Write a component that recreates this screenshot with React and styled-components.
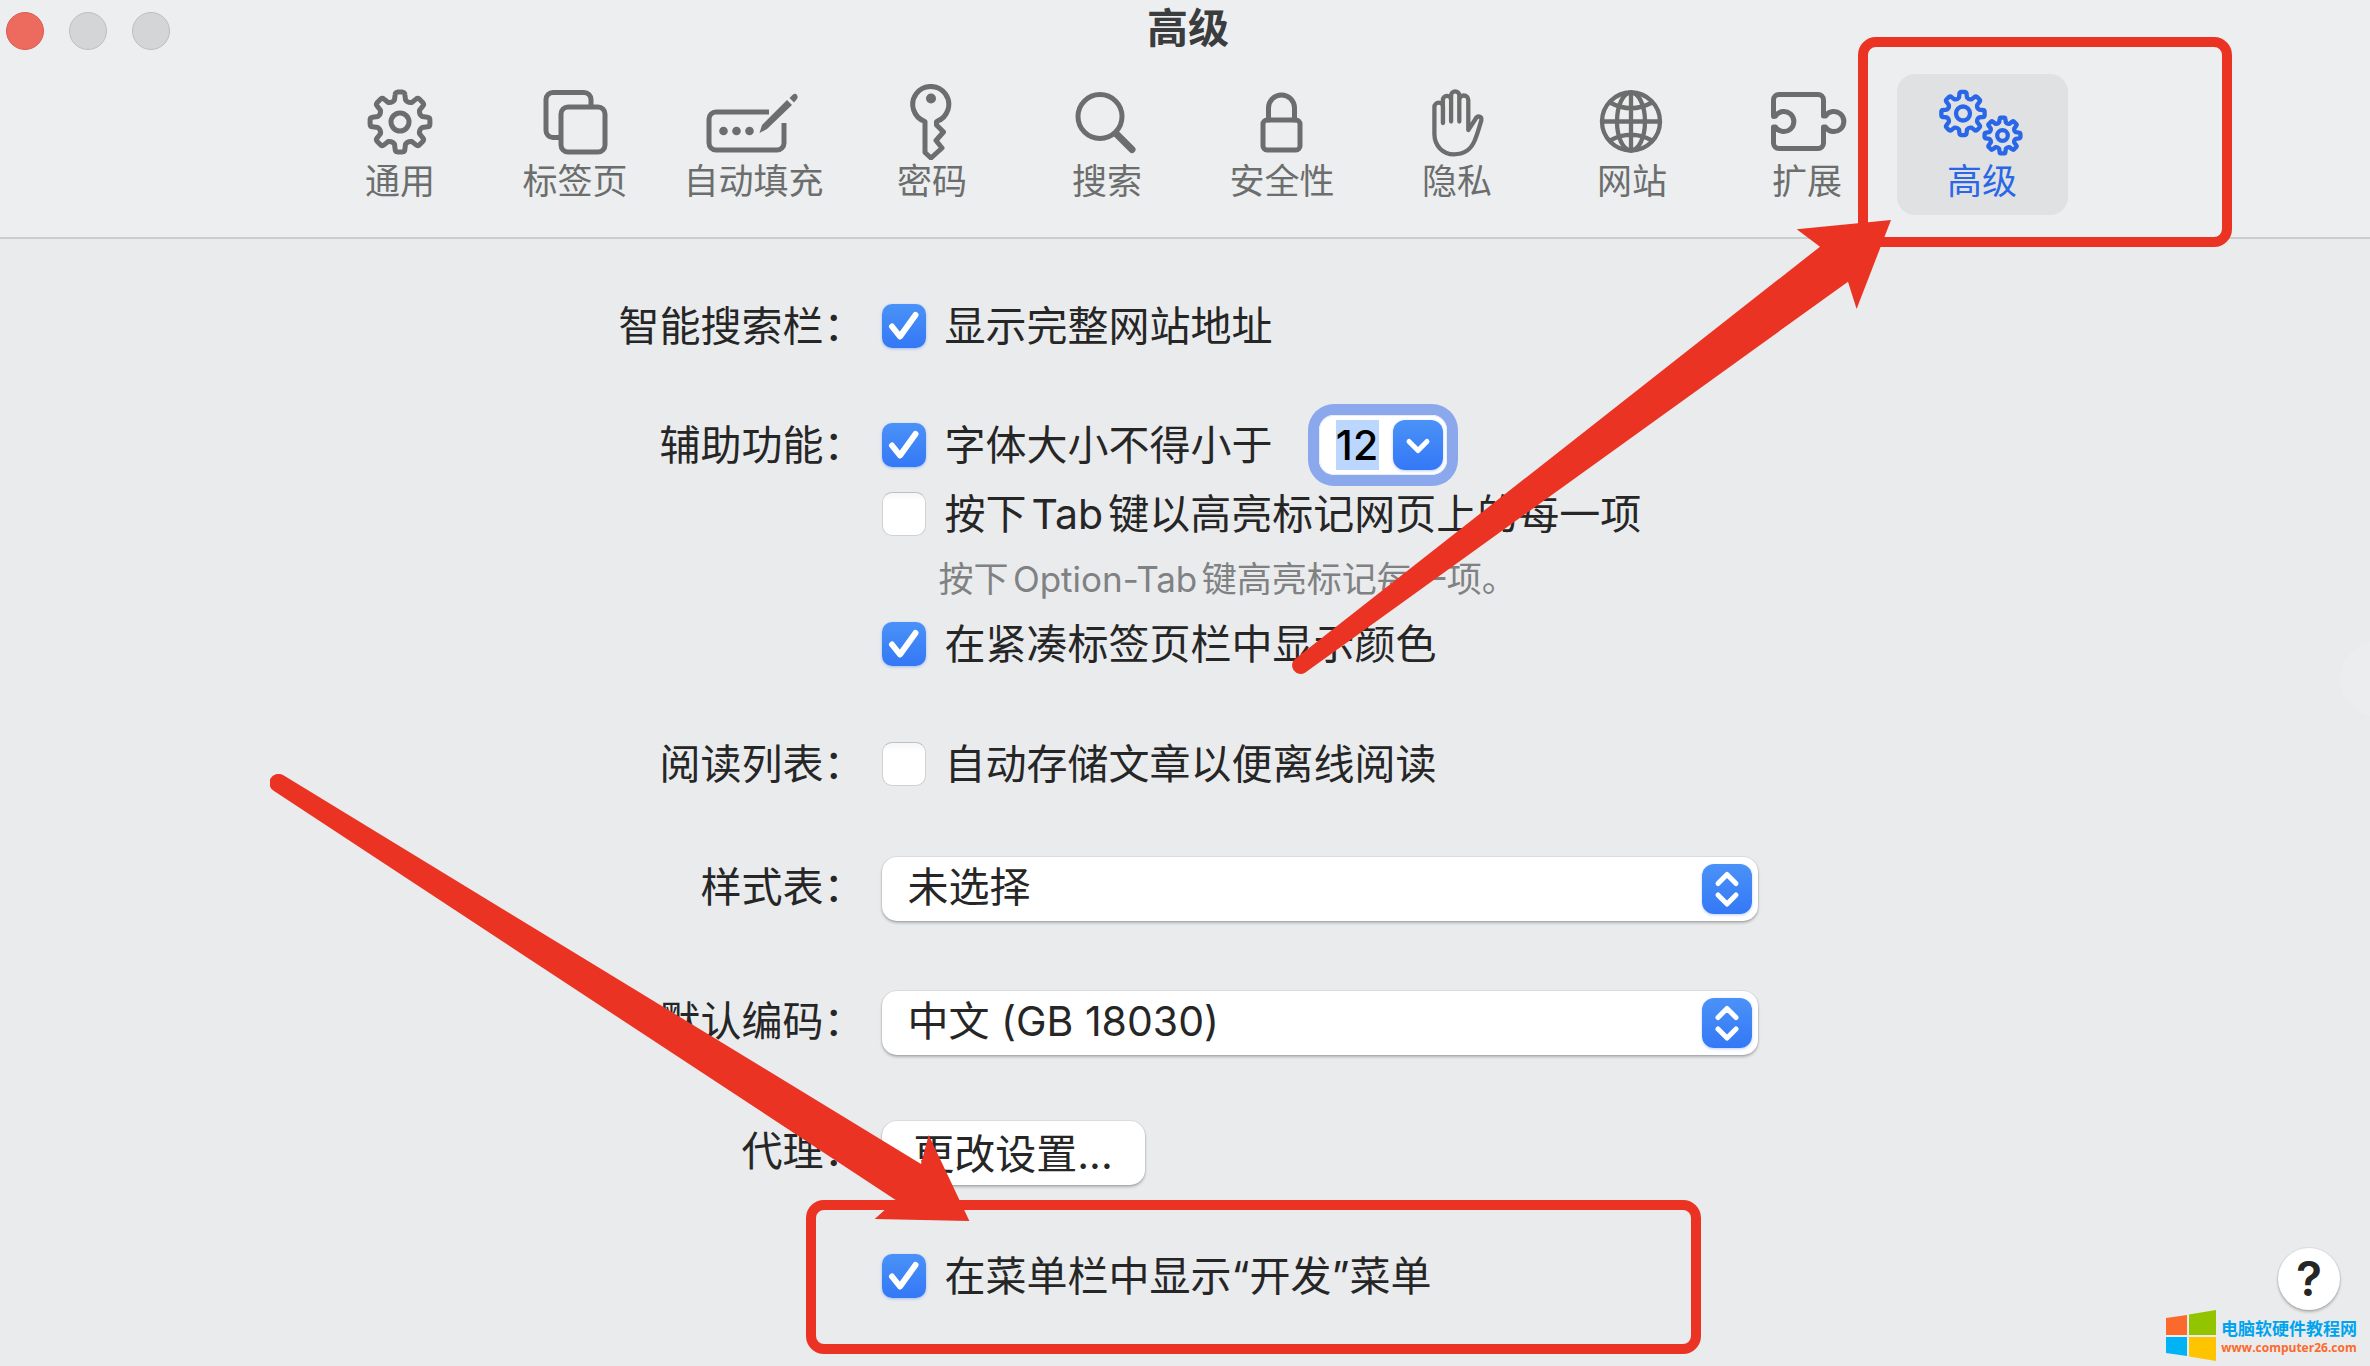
import React, { useState } from "react";
import styled, { createGlobalStyle } from "styled-components";

const GlobalStyle = createGlobalStyle`
    * {
        box-sizing: border-box;
    }
    body {
        margin: 0;
        background-color: #eaebed;
        font-family: Inter, "Noto Sans CJK SC", sans-serif;
        color: #262626;
    }
    button, input, select {
        font-family: inherit;
        color: inherit;
    }
`;

const Window = styled.div`
    position: relative;
    min-height: 100vh;
    overflow: hidden;
`;

const Header = styled.header`
    background-color: #edeef0;
    border-bottom: 2px solid #cbcdcf;
    padding-bottom: 22px;
`;

const TitleBar = styled.div`
    display: grid;
    grid-template-columns: 1fr auto 1fr;
    align-items: center;
    height: 62px;
    padding-left: 6px;
`;

const Lights = styled.div`
    display: flex;
    gap: 25px;
`;

const Light = styled.button`
    width: 38px;
    height: 38px;
    padding: 0;
    border-radius: 50%;
    border: 1px solid ${({$close}) => ($close ? "#dc5a4e" : "#bcbebf")};
    background-color: ${({$close}) => ($close ? "#ed6a5e" : "#d4d5d7")};
`;

const Title = styled.h1`
    align-self: start;
    margin: 0;
    font-size: 41px;
    line-height: 57px;
    font-weight: 700;
    color: #3b3c3d;
`;

const Toolbar = styled.nav`
    display: flex;
    justify-content: center;
    gap: 4px;
    margin-top: 12px;
    padding-left: 12px;
`;

const TabSlot = styled.div`
    position: relative;
`;

const Tab = styled.button`
    display: flex;
    flex-direction: column;
    align-items: center;
    min-width: 171px;
    padding: 10px 19px 12px 19px;
    border: 0;
    border-radius: 18px;
    background-color: ${({$active}) => ($active ? "#e0e1e3" : "transparent")};
    color: ${({$active}) => ($active ? "#2966e8" : "#6c6e6e")};
`;

const TabLabel = styled.span`
    font-size: 35px;
    line-height: 43px;
    white-space: nowrap;
`;

const TabIcon = styled.svg`
    display: block;
    width: 100px;
    height: 76px;
    fill: none;
    stroke: currentColor;
    stroke-width: 5;
    stroke-linecap: round;
    stroke-linejoin: round;
`;

const Form = styled.form`
    display: flex;
    flex-direction: column;
    align-items: center;
    padding: 62px 0 60px 6px;
`;

const FormRow = styled.div`
    display: grid;
    grid-template-columns: 246px minmax(0, 876px);
    column-gap: 17px;
    width: 100%;
    max-width: 1139px;
    margin-bottom: ${({$space}) => $space || 0}px;
`;

const RowLabel = styled.div`
    text-align: right;
    white-space: nowrap;
    font-size: 41px;
    line-height: ${({$height}) => $height || 50}px;
`;

const Field = styled.div`
    position: relative;
    display: flex;
    flex-direction: column;
    gap: 14px;
`;

const CheckRow = styled.div`
    display: flex;
    align-items: center;
    height: ${({$tall}) => ($tall ? 60 : 50)}px;
`;

const CheckLabel = styled.label`
    display: flex;
    align-items: center;
    gap: 19px;
    font-size: 41px;
    line-height: 50px;
    white-space: nowrap;
    text-autospace: normal;
`;

const CheckBox = styled.span`
    position: relative;
    width: 44px;
    height: 44px;
`;

const CheckInput = styled.input`
    appearance: none;
    display: block;
    width: 44px;
    height: 44px;
    margin: 0;
    border: 1px solid #d0d1d2;
    border-top-color: #bfc0c1;
    border-radius: 10px;
    background: linear-gradient(#f6f6f6, #fff 20%);
    &:checked {
        border: 0;
        background: linear-gradient(#4a92f8, #3478f6);
        box-shadow: 0 1px 3px rgba(52, 120, 246, 0.4);
    }
`;

const CheckMark = styled.svg`
    position: absolute;
    inset: 0;
    fill: none;
    stroke: white;
    stroke-width: 6;
    stroke-linecap: round;
    stroke-linejoin: round;
    pointer-events: none;
`;

const Hint = styled.p`
    margin: 0 0 0 57px;
    font-size: 35px;
    line-height: 52px;
    color: #808182;
    white-space: nowrap;
    text-autospace: normal;
`;

const SizeBox = styled.div`
    display: flex;
    align-items: center;
    height: 60px;
    margin-left: 46px;
    padding: 0 4px 0 17px;
    gap: 14px;
    border-radius: 15px;
    background-color: white;
    box-shadow: inset 0 0 0 1px #e8edfb, 0 0 0 11px #8ba8ec;
`;

const SizeInput = styled.input`
    width: 43px;
    height: 50px;
    padding: 0;
    border: 0;
    outline: 0;
    text-align: center;
    font-size: 41px;
    font-weight: 500;
    color: black;
    background-color: #bbd7fd;
`;

const BlueBadge = styled.span`
    display: flex;
    align-items: center;
    justify-content: center;
    width: 50px;
    height: 50px;
    border-radius: 12px;
    background: linear-gradient(#4a92f8, #3478f6);
    box-shadow: 0 1px 3px rgba(52, 120, 246, 0.35);
    svg {
        fill: none;
        stroke: white;
        stroke-width: 5;
        stroke-linecap: round;
        stroke-linejoin: round;
    }
`;

const BadgeButton = styled(BlueBadge).attrs({ as: "button", type: "button" })`
    padding: 0;
    border: 0;
`;

const SelectBadge = styled(BlueBadge)`
    position: absolute;
    top: 7px;
    right: 6px;
    pointer-events: none;
`;

const SelectWrap = styled.div`
    position: relative;
`;

const Select = styled.select`
    appearance: none;
    display: block;
    width: 100%;
    height: 64px;
    padding: 0 70px 4px 26px;
    border: 0;
    border-radius: 15px;
    background-color: white;
    box-shadow: 0 0 0 1px rgba(0, 0, 0, 0.06), 0 2px 3px rgba(0, 0, 0, 0.25);
    font-size: 41px;
`;

const PushButton = styled.button`
    align-self: flex-start;
    width: 263px;
    height: 64px;
    padding: 0 0 6px 0;
    border: 0;
    border-radius: 15px;
    background-color: white;
    box-shadow: 0 0 0 1px rgba(0, 0, 0, 0.06), 0 2px 3px rgba(0, 0, 0, 0.25);
    font-size: 41px;
`;

const Marker = styled.div`
    position: absolute;
    z-index: 2;
    border: 10px solid #eb3323;
    border-radius: 18px;
    pointer-events: none;
`;

const TabMarker = styled(Marker)`
    top: -37px;
    right: -164px;
    bottom: -32px;
    left: -39px;
`;

const MenuMarker = styled(Marker)`
    top: -51px;
    bottom: -53px;
    left: -76px;
    right: 57px;
`;

const Arrow = styled.svg`
    position: absolute;
    z-index: 2;
    fill: #eb3323;
    pointer-events: none;
`;

const TabArrow = styled(Arrow)`
    top: 145px;
    left: -606px;
`;

const MenuArrow = styled(Arrow)`
    top: -477px;
    left: -612px;
`;

const Halo = styled.div`
    position: absolute;
    top: 641px;
    right: -48px;
    width: 78px;
    height: 76px;
    border-radius: 50%;
    background-color: #ecedef;
`;

const Corner = styled.div`
    position: absolute;
    right: 13px;
    bottom: 5px;
    display: flex;
    flex-direction: column;
    align-items: flex-end;
`;

const HelpButton = styled.button`
    width: 62px;
    height: 62px;
    margin-right: 17px;
    padding: 0;
    border: 0;
    border-radius: 50%;
    background-color: white;
    box-shadow: 0 0 0 1px rgba(0, 0, 0, 0.06), 0 2px 3px rgba(0, 0, 0, 0.25);
    font-size: 48px;
    font-weight: 600;
    line-height: 62px;
`;

const SiteLink = styled.a`
    display: flex;
    align-items: center;
    gap: 5px;
    text-decoration: none;
`;

const SiteText = styled.span`
    display: flex;
    flex-direction: column;
    align-items: center;
    white-space: nowrap;
`;

const SiteName = styled.span`
    font: 700 17px/24px "Noto Sans CJK SC", sans-serif;
    color: #00a4ee;
`;

const SiteAddress = styled.span`
    font: 700 12px/16px "Open Sans", sans-serif;
    color: #fb6a2c;
`;

// eight-toothed cog, outer is the radius of the tooth tops
const gearPath = (cx, cy, outer) => {
    const at = (radius, degrees) => {
        const angle = (degrees * Math.PI) / 180;
        return `${(cx + radius * Math.sin(angle)).toFixed(2)} ${(cy - radius * Math.cos(angle)).toFixed(2)}`;
    };
    let path = "";
    for (let i = 0; i < 8; i++) {
        const a = i * 45;
        path += `${i === 0 ? "M" : "L"}${at(outer * 0.76, a - 14)}`;
        path += `L${at(outer * 0.93, a - 10)}Q${at(outer, a - 9)} ${at(outer, a - 5)}`;
        path += `L${at(outer, a + 5)}Q${at(outer, a + 9)} ${at(outer * 0.93, a + 10)}`;
        path += `L${at(outer * 0.76, a + 14)}Q${at(outer * 0.68, a + 22.5)} ${at(outer * 0.76, a + 31)}`;
    }
    return path + "Z";
};

const icons = {
    general: (
        <>
            <path d={gearPath(50, 38, 30)} />
            <circle cx="50" cy="38" r="9" />
        </>
    ),
    tabs: (
        <>
            <path d="M34 53.5H28a7 7 0 0 1-7-7v-31a7 7 0 0 1 7-7h31a7 7 0 0 1 7 7v6" />
            <rect x="36" y="23" width="44" height="45" rx="7" />
        </>
    ),
    autofill: (
        <>
            <path d="M66 28H13a7 7 0 0 0-7 7v24a7 7 0 0 0 7 7h61a7 7 0 0 0 7-7V39" strokeLinecap="butt" />
            <g fill="currentColor" stroke="none">
                <circle cx="20.500" cy="47" r="4.300" />
                <circle cx="33.500" cy="47" r="4.300" />
                <circle cx="46.500" cy="47" r="4.300" />
                <path d="M56.500 49L59 41 84 16 89 21 64 45Z" />
                <path d="M86.500 14L90 10.500Q92.500 9 94 11T94 15L91 18.500Z" />
            </g>
        </>
    ),
    password: (
        <>
            <path d="M43 37.500A18 18 0 1 1 54.500 37.500V41L61.500 48 54 56.500 60 64 49 74 43 68.500Z" />
            <circle cx="49" cy="14.500" r="5" fill="currentColor" stroke="none" />
        </>
    ),
    search: (
        <>
            <circle cx="43" cy="32.500" r="22" />
            <path d="M59.500 50L75 65.500" strokeWidth="7" />
        </>
    ),
    security: (
        <>
            <rect x="31" y="36" width="37" height="30" rx="4" />
            <path d="M36.500 36V24a13 13 0 0 1 26 0V36" />
        </>
    ),
    privacy: (
        <path
            strokeWidth="4.300"
            d="M36 39V23a4.300 4.300 0 0 0-8.600 0V50C27.500 62 36 70.300 47 70.300C58 70.300 64 65 67.500 57
               C70.500 50 72 44 74.300 36.500C75 32 70.500 31 68.500 35L61.300 46V16a4.500 4.500 0 0 0-9 0V37.500V11.500a4.100 4.100 0 0 0-8.200 0V37.500V16a4.100 4.100 0 0 0-8.200 0V39"
        />
    ),
    websites: (
        <g strokeWidth="4.300">
            <circle cx="49" cy="37.500" r="29" />
            <ellipse cx="49" cy="37.500" rx="14" ry="29" />
            <path d="M49 8.500V66.500M20 37.500H78M28 18.500Q49 30 70 18.500M28 56.500Q49 45 70 56.500" />
        </g>
    ),
    extensions: (
        <path
            d="M16.500 32.500V16a5.500 5.500 0 0 1 5.500-5.500H61a5.500 5.500 0 0 1 5.500 5.500V32H68.500
               A10 10 0 1 1 68.500 43H66.500V59a5.500 5.500 0 0 1-5.500 5.500H22a5.500 5.500 0 0 1-5.500-5.500V43H18.500A10 10 0 1 0 18.500 32Z"
        />
    ),
    advanced: (
        <g strokeWidth="4.300">
            <path d={gearPath(31, 29.5, 21.700)} />
            <circle cx="31" cy="29.500" r="7" />
            <path d={gearPath(70.500, 51.500, 18)} />
            <circle cx="70.500" cy="51.500" r="5.300" />
        </g>
    ),
};

const tabs = [
    { id: "general", label: "通用" },
    { id: "tabs", label: "标签页" },
    { id: "autofill", label: "自动填充" },
    { id: "password", label: "密码" },
    { id: "search", label: "搜索" },
    { id: "security", label: "安全性" },
    { id: "privacy", label: "隐私" },
    { id: "websites", label: "网站" },
    { id: "extensions", label: "扩展" },
    { id: "advanced", label: "高级" },
];

const Check = ({ id, label, initial = false }) => {
    const [checked, setChecked] = useState(initial);
    return (
        <CheckLabel htmlFor={id}>
            <CheckBox>
                <CheckInput id={id} type="checkbox" checked={checked} onChange={() => setChecked(!checked)} />
                {checked && (
                    <CheckMark viewBox="0 0 44 44" aria-hidden="true">
                        <path d="M10 22.500L18 32.500 33.500 11" />
                    </CheckMark>
                )}
            </CheckBox>
            {label}
        </CheckLabel>
    );
};

const PopUp = ({ id, options }) => (
    <SelectWrap>
        <Select id={id}>
            {options.map((option) => (
                <option key={option}>{option}</option>
            ))}
        </Select>
        <SelectBadge>
            <svg width="50" height="50" viewBox="0 0 50 50" aria-hidden="true">
                <path d="M16 19.500L25 10.500 34 19.500M16 31L25 40 34 31" />
            </svg>
        </SelectBadge>
    </SelectWrap>
);

const App = () => {
    return (
        <Window>
            <GlobalStyle />
            <Header>
                <TitleBar>
                    <Lights>
                        <Light $close aria-label="关闭" />
                        <Light aria-label="最小化" />
                        <Light aria-label="缩放" />
                    </Lights>
                    <Title>高级</Title>
                </TitleBar>
                <Toolbar>
                    {tabs.map(({ id, label }) => (
                        <TabSlot key={id}>
                            <Tab type="button" $active={id === "advanced"}>
                                <TabIcon viewBox="0 0 100 76" aria-hidden="true">{icons[id]}</TabIcon>
                                <TabLabel>{label}</TabLabel>
                            </Tab>
                            {id === "advanced" && (
                                <>
                                    <TabMarker />
                                    <TabArrow width="602" height="458" viewBox="0 0 602 458" aria-hidden="true">
                                        <path d="M3.700 440.300A8.500 8.500 0 0 0 14 453.700L557 62.700 565.600 90 600 1 505.700 10.300 529 27.700Z" />
                                    </TabArrow>
                                </>
                            )}
                        </TabSlot>
                    ))}
                </Toolbar>
            </Header>

            <Form onSubmit={(event) => event.preventDefault()}>
                <FormRow $space={64}>
                    <RowLabel>智能搜索栏：</RowLabel>
                    <Field>
                        <CheckRow>
                            <Check id="full-address" label="显示完整网站地址" initial />
                        </CheckRow>
                    </Field>
                </FormRow>
                <FormRow $space={70}>
                    <RowLabel $height={60}>辅助功能：</RowLabel>
                    <Field>
                        <CheckRow $tall>
                            <Check id="min-size" label="字体大小不得小于" initial />
                            <SizeBox>
                                <SizeInput type="text" aria-label="字体大小" defaultValue="12" />
                                <BadgeButton aria-label="选择字体大小">
                                    <svg width="50" height="50" viewBox="0 0 50 50" aria-hidden="true">
                                        <path d="M16 21.500L25 30.500 34 21.500" />
                                    </svg>
                                </BadgeButton>
                            </SizeBox>
                        </CheckRow>
                        <CheckRow>
                            <Check id="tab-key" label="按下Tab键以高亮标记网页上的每一项" />
                        </CheckRow>
                        <Hint>按下Option-Tab键高亮标记每一项。</Hint>
                        <CheckRow>
                            <Check id="compact-color" label="在紧凑标签页栏中显示颜色" initial />
                        </CheckRow>
                    </Field>
                </FormRow>
                <FormRow $space={68}>
                    <RowLabel>阅读列表：</RowLabel>
                    <Field>
                        <CheckRow>
                            <Check id="offline" label="自动存储文章以便离线阅读" />
                        </CheckRow>
                    </Field>
                </FormRow>
                <FormRow $space={70}>
                    <RowLabel as="label" htmlFor="style-sheet" $height={60}>样式表：</RowLabel>
                    <PopUp id="style-sheet" options={["未选择"]} />
                </FormRow>
                <FormRow $space={66}>
                    <RowLabel as="label" htmlFor="encoding" $height={60}>默认编码：</RowLabel>
                    <PopUp id="encoding" options={["中文 (GB 18030)"]} />
                </FormRow>
                <FormRow $space={66}>
                    <RowLabel $height={60}>代理：</RowLabel>
                    <Field>
                        <PushButton type="button">更改设置...</PushButton>
                    </Field>
                </FormRow>
                <FormRow>
                    <RowLabel />
                    <Field>
                        <CheckRow>
                            <Check id="develop-menu" label="在菜单栏中显示“开发”菜单" initial />
                        </CheckRow>
                        <MenuMarker />
                        <MenuArrow width="700" height="448" viewBox="0 0 700 448" aria-hidden="true">
                            <path d="M13 1A9 9 0 0 0 4 17L625.700 426 604.700 445 699.400 447 658.700 361 651 390Z" />
                        </MenuArrow>
                    </Field>
                </FormRow>
            </Form>

            <Halo />
            <Corner>
                <HelpButton type="button" aria-label="帮助">?</HelpButton>
                <SiteLink href="http://www.computer26.com">
                    <svg width="50" height="51" viewBox="0 0 50 51" aria-hidden="true">
                        <path d="M0 8L21 5V25H0Z" fill="#fb6a2c" />
                        <path d="M23 4.500L50 0V25H23Z" fill="#92c400" />
                        <path d="M0 27H21V46L0 43Z" fill="#00b3f4" />
                        <path d="M23 27H50V51L23 46.500Z" fill="#ffc400" />
                    </svg>
                    <SiteText>
                        <SiteName>电脑软硬件教程网</SiteName>
                        <SiteAddress>www.computer26.com</SiteAddress>
                    </SiteText>
                </SiteLink>
            </Corner>
        </Window>
    );
};

export default App;
